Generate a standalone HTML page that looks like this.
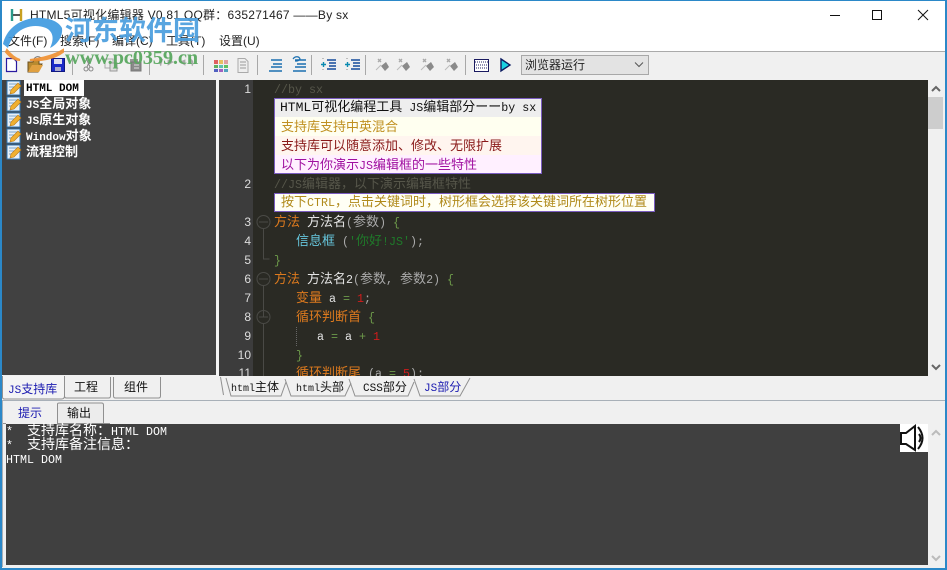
<!DOCTYPE html>
<html><head><meta charset="utf-8">
<style>
html,body{margin:0;padding:0}
body{width:947px;height:570px;overflow:hidden;position:relative;background:#f0f0f0;font-family:"Liberation Sans","Noto Sans CJK SC",sans-serif}
div,span.a,svg.a{position:absolute}
.t{position:absolute;white-space:pre;line-height:19px;font-size:13px;font-family:"Liberation Mono","WenQuanYi Zen Hei","Noto Sans CJK SC",monospace;color:#ddd}
.l{font-family:"Liberation Mono",monospace;font-size:11.67px;font-style:normal}
.n{position:absolute;left:219px;width:32px;text-align:right;font:12px/19px "Liberation Sans",sans-serif;color:#ddd}
.or{color:#dd7a1e}.gr{color:#6d9a4a}.pu{color:#aaa}.cy{color:#66c6dc}.st{color:#1f7a2a}.re{color:#d01c1c}.wh{color:#e4e4e4}
.m{position:absolute;top:33px;font-size:12px;line-height:16px;color:#222;white-space:pre}
.sep{position:absolute;top:55px;width:1px;height:20px;background:#a8a8a8}
.tr{position:absolute;left:26px;font:bold 13px/16px "Liberation Mono","WenQuanYi Zen Hei","Noto Sans CJK SC",monospace;color:#fff;white-space:pre}
.tr i{font-family:"Liberation Mono",monospace;font-style:normal;font-size:11px}
.tb{position:absolute;font-size:12px;line-height:18px;color:#111;white-space:pre}
.tb i{font-family:"Liberation Mono",monospace;font-style:normal;font-size:10px}
.o{position:absolute;left:6px;font:11.67px/14px "Liberation Mono","WenQuanYi Zen Hei","Noto Sans CJK SC",monospace;color:#fff;white-space:pre}
.o span{font-size:14px}
</style></head><body>
<svg width="0" height="0" style="position:absolute"><defs>
<g id="note"><rect x="1" y="1" width="13" height="14" fill="#e8f0f8" stroke="#2f78b8"/><path d="M3 4h9M3 7h6M3 10h4" stroke="#7aa6cc"/><path d="M4 14l1-4 7-7 3 3-7 7z" fill="#f0b030" stroke="#b87818" stroke-width=".6"/></g>
<g id="gem" fill="none"><path d="M1 13L6 8" stroke="#bbb"/><path d="M6 9l5-4 3 5-4 4z" fill="#8a8a8a"/><path d="M3 2l3 3M6 2L3 5" stroke="#aaa" stroke-width="1.4"/></g>
<g id="lines"><path d="M4 3h11M6 7h9M4 10h11M2 14h13" stroke="#1a6fb0" stroke-width="1.6"/></g>
<g id="ind"><path d="M7 3h9M9 6h7M9 9h7M7 12h9" stroke="#144a9a" stroke-width="1.6"/><path d="M1 7.5h5M3.5 5v5" stroke="#0a8ab0" stroke-width="1.4"/><path d="M3 1v2M3 12v2" stroke="#888" stroke-dasharray="1 1"/></g>
</defs></svg>

<!-- window frame -->
<div style="left:0;top:0;width:947px;height:52px;background:#fff"></div>
<div style="left:0;top:51px;width:947px;height:1px;background:#aaa"></div>
<div style="left:0;top:0;width:947px;height:1px;background:#2b88c8"></div>
<div style="left:0;top:0;width:2px;height:570px;background:#2b88c8;z-index:9"></div>
<div style="left:945px;top:0;width:2px;height:570px;background:#2b88c8;z-index:9"></div>
<div style="left:0;top:568px;width:947px;height:2px;background:#2b88c8;z-index:9"></div>

<!-- title -->
<svg class="a" style="left:10px;top:7px" width="14" height="16"><path d="M2 2v12" stroke="#2a9a8a" stroke-width="2.4"/><path d="M11 2v12" stroke="#c8a020" stroke-width="2.4"/><path d="M3 8h7" stroke="#555" stroke-width="2"/></svg>
<div style="left:30px;top:7px;font-size:12px;letter-spacing:.25px;line-height:16px;color:#222;white-space:pre">HTML5可视化编辑器 V0.81 QQ群：635271467 ——By sx</div>
<svg class="a" style="left:825px;top:5px" width="110" height="20" fill="none" stroke="#111"><path d="M5 10.5h10"/><rect x="47.5" y="5.5" width="9" height="9"/><path d="M93 5l10 10M103 5L93 15"/></svg>

<!-- menu -->
<div class="m" style="left:8px">文件(F)</div>
<div class="m" style="left:60px">搜索(F)</div>
<div class="m" style="left:112px">编译(C)</div>
<div class="m" style="left:166px">工具(T)</div>
<div class="m" style="left:219px">设置(U)</div>

<!-- toolbar -->
<div class="sep" style="left:72px"></div><div class="sep" style="left:149px"></div><div class="sep" style="left:203px"></div><div class="sep" style="left:257px"></div><div class="sep" style="left:311px"></div><div class="sep" style="left:365px"></div><div class="sep" style="left:465px"></div>
<svg class="a" style="left:0;top:52px" width="520" height="26" fill="none">
<path d="M6.5 6.500h7l3 3v10h-10z" fill="#fff" stroke="#2a1aa0" stroke-width="1.2"/>
<path d="M28 10h5l1-2h5v4h3l-4 8H28z" fill="#b88a30" stroke="#6a5020"/><path d="M28 20l4-7h11l-4 7z" fill="#e0a040"/><path d="M34 7c2-3 5-3 7-1" stroke="#777"/>
<rect x="51.500" y="6.500" width="13" height="13" fill="#1a2ac8" stroke="#101880"/><rect x="54" y="7" width="8" height="5" fill="#dde"/><rect x="55" y="15" width="6" height="4" fill="#aac"/>
<circle cx="86" cy="17" r="2" stroke="#888"/><circle cx="91" cy="17" r="2" stroke="#888"/><path d="M87 15l4-9M90 15l-4-9" stroke="#888"/>
<path d="M105 7h8v9h-8z" fill="#eee" stroke="#aaa"/><path d="M110 11h7v8h-7z" fill="#ddd" stroke="#999"/>
<path d="M130 7h8v4h-8z" fill="#999"/><path d="M131 10h10v9h-10z" fill="#8a8a8a" stroke="#777"/><path d="M134 13h5M134 16h5" stroke="#ddd"/>
<path d="M161 14c-2-3-1-6 2-7M173 10l-5-2v5z" stroke="#aaa" fill="#aaa" stroke-width=".8"/>
<path d="M192 14c2-3 1-6-2-7M180 10l5-2v5z" stroke="#aaa" fill="#aaa" stroke-width=".8"/>
<g><rect x="214" y="8" width="4" height="4" fill="#e06060"/><rect x="219" y="8" width="4" height="4" fill="#e8c060"/><rect x="224" y="8" width="4" height="4" fill="#e0a0a0"/><rect x="214" y="13" width="4" height="3" fill="#60b060"/><rect x="219" y="13" width="4" height="3" fill="#60c0b0"/><rect x="224" y="13" width="4" height="3" fill="#60c060"/><rect x="214" y="17" width="4" height="3" fill="#5060c0"/><rect x="219" y="17" width="4" height="3" fill="#a060c0"/><rect x="224" y="17" width="4" height="3" fill="#50a0c0"/></g>
<path d="M238 6.500h7l3 3v11h-10z" fill="#eee" stroke="#aaa"/><path d="M240 10h6M240 13h6M240 16h6" stroke="#999"/>
<use href="#lines" x="267" y="5"/><use href="#lines" x="291" y="5"/><path d="M293 7c2-3 6-3 7 0-1 2-3 2-5 2" stroke="#1a6fb0" stroke-width="1.200"/>
<use href="#ind" x="320" y="5"/><use href="#ind" x="344" y="5"/>
<use href="#gem" x="375" y="5"/><use href="#gem" x="396" y="5"/><use href="#gem" x="420" y="5"/><use href="#gem" x="444" y="5"/>
<rect x="474.500" y="7.500" width="14" height="12" fill="#fff" stroke="#1a1a60"/><path d="M475 10h14M476 13h12M476 16h12" stroke="#226" stroke-dasharray="1 1"/>
<path d="M501 7l9 6-9 6z" fill="#19d0e0" stroke="#0a1a60" stroke-width="1.4"/>
</svg>
<div style="left:521px;top:55px;width:126px;height:18px;background:#e3e3e3;border:1px solid #a8a8a8"></div>
<div style="left:525px;top:56px;font-size:12px;line-height:18px;color:#222">浏览器运行</div>
<svg class="a" style="left:634px;top:61px" width="10" height="8" fill="none" stroke="#555"><path d="M1 1.500l4 4 4-4"/></svg>

<!-- left panel -->
<div style="left:2px;top:80px;width:214px;height:295px;background:#414141"></div>
<div style="left:24px;top:80px;width:60px;height:16px;background:#fff"></div>
<svg class="a" style="left:6px;top:80px" width="16" height="88"><use href="#note" y="0"/><use href="#note" y="16"/><use href="#note" y="32"/><use href="#note" y="48"/><use href="#note" y="64"/></svg>
<div class="tr" style="top:81px;color:#000;font-size:11px">HTML DOM</div>
<div class="tr" style="top:97px"><i>JS</i>全局对象</div>
<div class="tr" style="top:113px"><i>JS</i>原生对象</div>
<div class="tr" style="top:129px"><i>Window</i>对象</div>
<div class="tr" style="top:145px">流程控制</div>

<!-- editor -->
<div style="left:219px;top:80px;width:34px;height:296px;background:#3c3c3c"></div>
<div style="left:253px;top:80px;width:675px;height:296px;background:#2a2a24;overflow:hidden"></div>
<svg class="a" style="left:253px;top:210px" width="22" height="166" fill="none" stroke="#4a4a46"><circle cx="10.500" cy="12" r="6.500"/><path d="M6 12h9M10.500 19v30h6"/><circle cx="10.500" cy="69" r="6.500"/><path d="M6 69h9M10.500 76v31"/><circle cx="10.500" cy="107" r="6.500"/><path d="M6 107h9M10.500 114v52"/></svg>
<div class="n" style="top:80px">1</div><div class="n" style="top:175px">2</div><div class="n" style="top:213px">3</div><div class="n" style="top:232px">4</div><div class="n" style="top:251px">5</div><div class="n" style="top:270px">6</div><div class="n" style="top:289px">7</div><div class="n" style="top:308px">8</div><div class="n" style="top:327px">9</div><div class="n" style="top:346px">10</div><div class="n" style="top:364px;height:12px;overflow:hidden">11</div>

<div class="t" style="left:274px;top:80px;color:#56564a"><i class="l">//by sx</i></div>
<!-- tip 1 -->
<div style="left:274px;top:98px;width:266px;height:74px;border:1px solid #7a5cc0;background:#fff0ff;overflow:hidden">
<div style="left:0;top:0;width:266px;height:18px;background:#eeeeee"></div>
<div style="left:0;top:18px;width:266px;height:19px;background:#fffff0"></div>
<div style="left:0;top:37px;width:266px;height:19px;background:#fff5ef"></div>
</div>
<div class="t" style="left:280px;top:98px;color:#111">HTML可视化编程工具<i class="l"> JS</i>编辑部分ーー<i class="l">by sx</i></div>
<div class="t" style="left:281px;top:118px;color:#c09020">支持库支持中英混合</div>
<div class="t" style="left:281px;top:137px;color:#8a1a1a">支持库可以随意添加、修改、无限扩展</div>
<div class="t" style="left:281px;top:156px;color:#a010a0">以下为你演示<i class="l">JS</i>编辑框的一些特性</div>
<div class="t" style="left:274px;top:175px;color:#56564a"><i class="l">//JS</i>编辑器，以下演示编辑框特性</div>
<!-- tip 2 -->
<div style="left:274px;top:193px;width:379px;height:17px;border:1px solid #7a5cc0;background:#fffff5"></div>
<div class="t" style="left:281px;top:193px;color:#b08a1a">按下<i class="l">CTRL</i>，点击关键词时，树形框会选择该关键词所在树形位置</div>

<div class="t" style="left:274px;top:213px"><span class="or">方法</span><i class="l"> </i><span class="wh">方法名</span><span class="pu"><i class="l">(</i>参数<i class="l">)</i></span><i class="l gr"> {</i></div>
<div class="t" style="left:296px;top:232px"><span class="cy">信息框</span><i class="l pu"> (</i><span class="st"><i class="l">'</i>你好<i class="l">!JS'</i></span><i class="l pu">);</i></div>
<div class="t" style="left:274px;top:251px"><i class="l gr">}</i></div>
<div class="t" style="left:274px;top:270px"><span class="or">方法</span><i class="l"> </i><span class="wh">方法名<i class="l">2</i></span><span class="pu"><i class="l">(</i>参数<i class="l">, </i>参数<i class="l">2)</i></span><i class="l gr"> {</i></div>
<div class="t" style="left:296px;top:289px"><span class="or">变量</span><i class="l wh"> a </i><i class="l gr">= </i><i class="l re">1</i><i class="l pu">;</i></div>
<div class="t" style="left:296px;top:308px"><span class="or">循环判断首</span><i class="l gr"> {</i></div>
<div class="t" style="left:317px;top:327px"><i class="l wh">a </i><i class="l gr">= </i><i class="l wh">a </i><i class="l gr">+ </i><i class="l re">1</i></div>
<div class="t" style="left:296px;top:346px"><i class="l gr">}</i></div>
<div style="left:253px;top:364px;width:600px;height:12px;overflow:hidden"><div class="t" style="left:43px;top:0"><span class="or">循环判断尾</span><i class="l pu"> (a </i><i class="l gr">= </i><i class="l re">5</i><i class="l pu">);</i></div></div>
<div style="left:296px;top:327px;width:0;height:19px;border-left:1px dotted #666"></div>

<!-- white gutter -->
<div style="left:216px;top:80px;width:3px;height:320px;background:#f4f4f4"></div>

<!-- editor scrollbar -->
<div style="left:928px;top:80px;width:17px;height:296px;background:#f0f0f0"></div>
<div style="left:928px;top:97px;width:15px;height:32px;background:#cdcdcd"></div>
<svg class="a" style="left:930px;top:84px" width="12" height="292" fill="none" stroke="#666" stroke-width="2"><path d="M2 7l4-4 4 4M2 281l4 4 4-4"/></svg>

<!-- tabs row -->
<div style="left:0;top:376px;width:947px;height:25px;background:#f0f0f0"></div>
<div style="left:2px;top:400px;width:943px;height:1px;background:#a8b0b8"></div>
<svg class="a" style="left:0;top:374px" width="480" height="28" fill="none" stroke="#909090">
<path d="M64.500 3v19q0 2 2 2h42q2 0 2-2V3M113.500 3v19q0 2 2 2h43q2 0 2-2V3" fill="#f0f0f0"/>
<path d="M2.500 2v21q0 2 2 2h57q3 0 3-3V2" fill="#f4f4f4"/>
<path d="M220.500 3l3 18M226 4l5 18h50l5-14" />
<path d="M285 5l6 17h54l6-13M349 5l6 17h53l6-14M414 5l6 17h40l10-18" />
</svg>
<div class="tb" style="left:8px;top:380px;color:#1a1ab0"><i style="font-size:11px">JS</i>支持库</div>
<div class="tb" style="left:74px;top:378px">工程</div>
<div class="tb" style="left:124px;top:378px">组件</div>
<div class="tb" style="left:231px;top:378px"><i>html</i>主体</div>
<div class="tb" style="left:296px;top:378px"><i>html</i>头部</div>
<div class="tb" style="left:363px;top:378px"><i style="font-size:11px">CSS</i>部分</div>
<div class="tb" style="left:424px;top:378px;color:#1a1ab0"><i style="font-size:11px">JS</i>部分</div>

<!-- output tabs -->
<div style="left:2px;top:401px;width:943px;height:22px;background:#f0f0f0"></div>
<svg class="a" style="left:0;top:401px" width="110" height="24" fill="none" stroke="#909090"><path d="M57.500 22V3q0-1 2-1h42q2 0 2 2v18" fill="#ececec"/><path d="M2 22.500h4M57 22.500H928"/></svg>
<div class="tb" style="left:18px;top:404px;color:#1a1ab0">提示</div>
<div class="tb" style="left:67px;top:404px">输出</div>

<!-- output -->
<div style="left:6px;top:424px;width:922px;height:141px;background:#404040"></div>
<div class="o" style="top:425px">*  <span>支持库名称：</span>HTML DOM</div>
<div class="o" style="top:439px">*  <span>支持库备注信息：</span></div>
<div class="o" style="top:453px">HTML DOM</div>
<div style="left:900px;top:424px;width:28px;height:28px;background:#fff"></div>
<svg class="a" style="left:900px;top:424px" width="28" height="28" fill="none" stroke="#111" stroke-width="2"><path d="M1 9h5l9-7v24l-9-6H1z"/><path d="M19 10q3 4 0 8"/><path d="M18 3q9 11 0 22"/></svg>
<div style="left:928px;top:424px;width:17px;height:141px;background:#f0f0f0"></div>
<svg class="a" style="left:930px;top:428px" width="12" height="136" fill="none" stroke="#bbb" stroke-width="2"><path d="M2 7l4-4 4 4M2 128l4 4 4-4"/></svg>
<div style="left:2px;top:565px;width:943px;height:3px;background:#f0f0f0"></div>
<div style="left:2px;top:401px;width:1px;height:166px;background:#a8b0b8"></div>

<!-- watermark -->
<svg class="a" style="left:0;top:0;z-index:5" width="70" height="74">
<path d="M3 44C6 30 18 20 34 18C46 17 58 20 62 28C63 36 58 44 50 48C54 40 54 32 46 28C36 24 24 26 16 34C12 38 10 42 8 48Z" fill="#3f9ae0" opacity=".92"/>
<path d="M7 50c3 4 7 8 13 10-5 0-10-3-14-8z" fill="#f09030" stroke="#f09030" stroke-width="2" opacity=".9"/>
<path d="M63 50c-8 5-18 8-33 10 10 1 24-1 33-8z" fill="#f09030" stroke="#f09030" stroke-width="2" opacity=".9"/>
</svg>
<div style="left:65px;top:13px;font:bold 27px/32px 'Noto Sans CJK SC',sans-serif;color:#4a9ede;opacity:.92;white-space:pre;z-index:5">河东软件园</div>
<div style="left:65px;top:47px;font:bold 20.500px/22px 'Liberation Serif',serif;color:#5aa860;opacity:.95;white-space:pre;z-index:5;letter-spacing:-.2px">www.pc0359.cn</div>
</body></html>
